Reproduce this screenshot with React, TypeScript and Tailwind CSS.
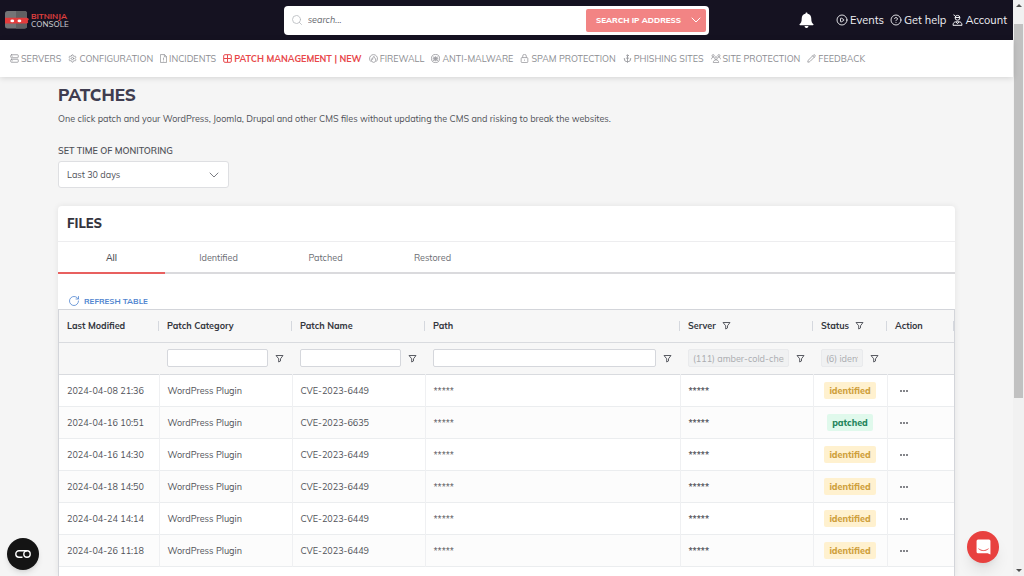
import type { ReactNode } from 'react'
import {
  Anchor,
  ChevronDown,
  CircleHelp,
  CirclePlay,
  Pencil,
  RotateCw,
  Search,
  Server,
  Settings,
} from 'lucide-react'

const navIcon = 'size-[9px] shrink-0'

const navItems: { label: string; icon: ReactNode; active?: boolean }[] = [
  { label: 'SERVERS', icon: <Server className={navIcon} strokeWidth={2} /> },
  { label: 'CONFIGURATION', icon: <Settings className={navIcon} strokeWidth={2} /> },
  { label: 'INCIDENTS', icon: <IncidentIcon /> },
  { label: 'PATCH MANAGEMENT | NEW', icon: <PatchIcon />, active: true },
  { label: 'FIREWALL', icon: <FirewallIcon /> },
  { label: 'ANTI-MALWARE', icon: <MalwareIcon /> },
  { label: 'SPAM PROTECTION', icon: <LockIcon /> },
  { label: 'PHISHING SITES', icon: <Anchor className={navIcon} strokeWidth={2} /> },
  { label: 'SITE PROTECTION', icon: <PeopleIcon /> },
  { label: 'FEEDBACK', icon: <Pencil className={navIcon} strokeWidth={2} /> },
]

const tabs = ['All', 'Identified', 'Patched', 'Restored']

const rows = [
  { date: '2024-04-08 21:36', name: 'CVE-2023-6449', status: 'identified' },
  { date: '2024-04-16 10:51', name: 'CVE-2023-6635', status: 'patched' },
  { date: '2024-04-16 14:30', name: 'CVE-2023-6449', status: 'identified' },
  { date: '2024-04-18 14:50', name: 'CVE-2023-6449', status: 'identified' },
  { date: '2024-04-24 14:14', name: 'CVE-2023-6449', status: 'identified' },
  { date: '2024-04-26 11:18', name: 'CVE-2023-6449', status: 'identified' },
]

function App() {
  return (
    <div className="flex h-screen overflow-hidden bg-[#f5f5f5] font-['Mulish','Open_Sans',sans-serif] text-[9px] text-[#4f5157]">
      <div className="relative flex min-w-0 flex-1 flex-col">
        <Header />
        <Nav />
        <main className="flex min-h-0 flex-1 flex-col px-[58px]">
          <Intro />
          <Files />
        </main>
        <button aria-label="Cookie settings" className="absolute bottom-1.5 left-[7px] flex size-8 items-center justify-center rounded-full bg-[#141414] shadow-md">
          <svg viewBox="0 0 16 8" className="w-4" fill="none" stroke="white" strokeWidth="1.4">
            <path d="M12 .8H4a3.200 3.200 0 0 0 0 6.400h3.500" />
            <circle cx="12" cy="4" r="3.200" />
          </svg>
        </button>
        <button aria-label="Open chat" className="absolute bottom-[13px] right-3.5 flex size-8 items-center justify-center rounded-full bg-[#e8413f] shadow-lg">
          <svg viewBox="0 0 16 17" className="w-[15px]" fill="none">
            <path d="M2.2 0.5h11.6a1.6 1.6 0 0 1 1.6 1.6V16.4l-3-1.2H2.2a1.6 1.6 0 0 1-1.6-1.6V2.1A1.6 1.6 0 0 1 2.2 .5z" fill="white" />
            <path d="M3 10.6c3 2.4 7 2.4 10 0" stroke="#e8413f" strokeWidth="1" strokeLinecap="round" />
          </svg>
        </button>
      </div>
      <Scrollbar />
    </div>
  )
}

function Header() {
  return (
    <header className="flex h-10 shrink-0 items-center bg-[#151221]">
      <a href="#" className="flex w-[28%] items-center gap-0.5 pl-[5px]">
        <Logo />
        <span className="text-[8px] leading-2 text-[#c9c9cf]">
          <span className="block font-bold text-[#e0403f]">BITNINJA</span>
          <span className="block font-medium">CONSOLE</span>
        </span>
      </a>
      <div className="flex h-[29px] w-[42%] items-center rounded-sm bg-white pl-[7px] pr-[3px]">
        <Search className="size-3 text-[#b5b7bc]" strokeWidth={1.6} />
        <input aria-label="Search" placeholder="search..." className="ml-[5px] min-w-0 flex-1 italic outline-none placeholder:text-[#66686e]" />
        <button className="flex h-[23px] w-[120px] items-center justify-between rounded-xs bg-[#f28484] pl-2.5 pr-0.5 text-[8px] font-extrabold text-white">
          SEARCH IP ADDRESS
          <ChevronDown className="size-4" strokeWidth={1.5} />
        </button>
      </div>
      <div className="flex flex-1 items-center justify-end gap-1.5 pr-1.5 text-[11px] text-[#f0f0f4]">
        <button aria-label="Notifications" className="mr-4">
          <svg viewBox="0 0 16 18" className="w-[15px]" fill="white">
            <path d="M8 .6c.7 0 1.1.5 1.1 1.2 2.5.5 4 2.400 4 5.100 0 3.600.9 4.900 2.100 5.900.6.500.300 1.300-.500 1.300H1.300c-.8 0-1.100-.800-.5-1.300C2 11.800 2.900 10.500 2.900 6.900c0-2.700 1.500-4.600 4-5.100C6.900 1.100 7.300.6 8 .6zM5.900 15h4.200a2.100 2.100 0 0 1-4.200 0z" />
          </svg>
        </button>
        <a href="#" className="flex items-center gap-0.5">
          <CirclePlay className="size-3" strokeWidth={1.8} />
          Events
        </a>
        <a href="#" className="flex items-center gap-0.5">
          <CircleHelp className="size-3" strokeWidth={1.8} />
          Get help
        </a>
        <a href="#" className="flex items-center gap-0.5">
          <AccountIcon />
          Account
        </a>
      </div>
    </header>
  )
}

function Nav() {
  return (
    <nav className="z-10 flex h-[37px] shrink-0 items-center gap-[7px] bg-white pl-2.5 text-[#8b8c91] shadow-[0_1px_6px_rgba(0,0,0,0.14)]">
      {navItems.map((item) => (
        <a
          key={item.label}
          href="#"
          className={`flex items-center gap-0.5 whitespace-nowrap ${item.active ? 'font-bold text-[#e8474a]' : ''}`}
        >
          {item.icon}
          {item.label}
        </a>
      ))}
    </nav>
  )
}

function Intro() {
  return (
    <section className="shrink-0 pt-2">
      <h1 className="text-[17px] font-extrabold leading-5 text-[#3f3d50]">PATCHES</h1>
      <p className="mt-1.5 leading-4">
        One click patch and your WordPress, Joomla, Drupal and other CMS files without updating the CMS and risking to break the websites.
      </p>
      <label htmlFor="monitoring" className="mt-[18px] block font-semibold leading-3">
        SET TIME OF MONITORING
      </label>
      <div className="relative mt-1 w-[171px]">
        <select id="monitoring" className="h-[27px] w-full appearance-none rounded-[3px] border border-[#dedfe2] bg-white pl-2">
          <option>Last 30 days</option>
        </select>
        <ChevronDown className="pointer-events-none absolute right-[7px] top-1.5 size-4 text-[#7b7d83]" strokeWidth={1.5} />
      </div>
    </section>
  )
}

function Files() {
  return (
    <section className="mt-[18px] flex min-h-0 flex-1 flex-col rounded-t-sm bg-white shadow-[0_0_6px_rgba(0,0,0,0.08)]">
      <h2 className="h-9 shrink-0 border-b border-[#ededef] pl-[9px] text-[13px] font-extrabold leading-[35px] text-[#34343d]">FILES</h2>
      <div className="flex h-8 shrink-0 border-b-2 border-[#dadadd]">
        {tabs.map((tab, i) => (
          <button
            key={tab}
            className={`-mb-0.5 w-[107px] border-b-2 pt-0.5 ${i === 0 ? 'border-[#e8605f] font-semibold' : 'border-transparent text-[#6a6c72]'}`}
          >
            {tab}
          </button>
        ))}
      </div>
      <button className="mt-[19px] flex h-4 shrink-0 items-center gap-1 self-start pl-2.5 text-[8px] font-bold text-[#5185d0]">
        <RotateCw className="size-3" strokeWidth={1.6} />
        REFRESH TABLE
      </button>
      <div className="min-h-0 flex-1 overflow-hidden border border-b-0 border-[#d3d5da]">
        <PatchTable />
      </div>
    </section>
  )
}

function PatchTable() {
  return (
    <table className="w-full table-fixed border-collapse text-left">
      <colgroup>
        <col className="w-[100px]" />
        <col className="w-[133px]" />
        <col className="w-[133px]" />
        <col />
        <col className="w-[133px]" />
        <col className="w-[74px]" />
        <col className="w-[67px]" />
      </colgroup>
      <thead className="bg-[#f7f7f7] text-[#33363d]">
        <tr className="h-8 border-b border-[#d9dbdf]">
          <Heading>Last Modified</Heading>
          <Heading>Patch Category</Heading>
          <Heading>Patch Name</Heading>
          <Heading>Path</Heading>
          <Heading filter>Server</Heading>
          <Heading filter>Status</Heading>
          <Heading>Action</Heading>
        </tr>
        <tr className="h-8 border-b border-[#d9dbdf]">
          <td />
          <FilterCell label="Patch category" />
          <FilterCell label="Patch name" />
          <FilterCell label="Path" />
          <FilterCell label="Server" value="(111) amber-cold-cherry" />
          <FilterCell label="Status" value="(6) identified" />
          <td />
        </tr>
      </thead>
      <tbody>
        {rows.map((row) => (
          <tr key={row.date} className="h-8 border-b border-[#ebedef] even:bg-[#fcfcfc] *:border-r *:border-[#eff0f2] *:pl-2 *:pt-px *:last:border-r-0">
            <td>{row.date}</td>
            <td>WordPress Plugin</td>
            <td>{row.name}</td>
            <td>*****</td>
            <td className="font-bold">*****</td>
            <td className="pr-2 text-center">
              <span
                className={`inline-block rounded-xs px-[5px] font-extrabold leading-[17px] ${
                  row.status === 'patched' ? 'bg-[#e0f9ec] text-[#24855c]' : 'bg-[#fff1cf] text-[#cfa03c]'
                }`}
              >
                {row.status}
              </span>
            </td>
            <td>
              <button aria-label="Row actions" className="ml-1 flex gap-px">
                <Dot />
                <Dot />
                <Dot />
              </button>
            </td>
          </tr>
        ))}
      </tbody>
    </table>
  )
}

function Heading({ children, filter }: { children: ReactNode; filter?: boolean }) {
  return (
    <th className="pl-2 font-bold">
      <span className="flex h-[10px] items-center gap-1.5 border-r border-[#d5d8de]">
        {children}
        {filter && <FilterIcon />}
      </span>
    </th>
  )
}

function FilterCell({ label, value }: { label: string; value?: string }) {
  return (
    <td className="pl-2">
      <span className="flex items-center gap-[7px] pr-2">
        <input
          aria-label={`${label} filter`}
          defaultValue={value}
          disabled={value !== undefined}
          className="h-[18px] min-w-0 flex-1 rounded-xs border border-[#d5d7dc] bg-white px-1 disabled:border-[#e9eaec] disabled:bg-[#f0f1f2] disabled:text-[#a9abaf]"
        />
        <button aria-label={`${label} filter options`}>
          <FilterIcon />
        </button>
      </span>
    </td>
  )
}

function Dot() {
  return <span className="size-0.5 rounded-full bg-[#5b5d63]" />
}

function FilterIcon() {
  return (
    <svg viewBox="0 0 9 9" className="size-[9px] shrink-0" fill="none" stroke="#5a5c63" strokeWidth="1">
      <path d="M1 1.500h7L5.500 4.800V7L3.700 8V4.800z" strokeLinejoin="round" />
    </svg>
  )
}

function Scrollbar() {
  return (
    <div className="flex w-[11px] shrink-0 flex-col items-center bg-[#f1f1f1] px-px">
      <span className="mt-1 border-x-[3px] border-b-[3px] border-x-transparent border-b-[#505050]" />
      <span className="mt-[17px] h-[65%] w-full bg-[#c1c1c1]" />
      <span className="mb-1 mt-auto border-x-[3px] border-t-[3px] border-x-transparent border-t-[#505050]" />
    </div>
  )
}

function Logo() {
  return (
    <svg viewBox="0 0 24 18" className="w-6">
      <rect width="22" height="17.500" rx="2.500" fill="#747476" />
      <path d="M11 0h8.500a2.500 2.500 0 0 1 2.500 2.500V15a2.500 2.500 0 0 1-2.500 2.500H11z" fill="#606062" />
      <path d="M0 6.800h22l2 1.200-1.300 2 .5 1.600-1.200 1H0z" fill="#e33b3b" />
      <ellipse cx="7.300" cy="9.900" rx="1.900" ry="1.300" fill="white" />
      <ellipse cx="14.400" cy="9.900" rx="1.900" ry="1.300" fill="white" />
    </svg>
  )
}

function IncidentIcon() {
  return (
    <svg viewBox="0 0 8 10" className="h-[9px] w-[7px]" fill="none" stroke="currentColor" strokeWidth=".8">
      <path d="M.5.5h4.700L7.500 2.800v6.700h-7zM5 .5v2.500h2.500M4 4v2.600M4 7.400v.9" />
    </svg>
  )
}

function PatchIcon() {
  return (
    <svg viewBox="0 0 9 9" className={navIcon} fill="none" stroke="currentColor" strokeWidth="1">
      <rect x=".7" y=".7" width="7.600" height="7.600" rx="1.200" />
      <path d="M4.500 1v7M1 4.500h7" />
    </svg>
  )
}

function LockIcon() {
  return (
    <svg viewBox="0 0 9 10" className={navIcon} fill="none" stroke="currentColor" strokeWidth=".8">
      <rect x=".8" y="4" width="7.400" height="5.500" rx="1" />
      <path d="M2.500 4V2.400a2 2 0 0 1 4 0V4M4.500 6.200v1.200" />
    </svg>
  )
}

function FirewallIcon() {
  return (
    <svg viewBox="0 0 10 10" className={navIcon} fill="none" stroke="currentColor" strokeWidth=".8">
      <path d="M2.500 8.700A4.400 4.400 0 1 1 7.500 8.700" />
      <path d="M5 9.300C2.600 9 2 6.600 3.300 5.100c.2.700.5.900.9.900C4 4.500 4.400 3.300 5.600 2.500c0 1.500 1.900 2.200 1.900 4.300C7.500 8.200 6.500 9.200 5 9.300z" />
    </svg>
  )
}

function MalwareIcon() {
  return (
    <svg viewBox="0 0 10 10" className={navIcon} fill="none" stroke="currentColor" strokeWidth=".8">
      <circle cx="5" cy="5" r="4.500" />
      <ellipse cx="5" cy="5.300" rx="1.500" ry="2.200" />
      <path d="M2 3l1.600 1M8 3L6.400 4M1.800 5.300h6.400M2 7.500l1.600-.8M8 7.500l-1.600-.8M5 3.200v4" />
    </svg>
  )
}

function PeopleIcon() {
  return (
    <svg viewBox="0 0 11 10" className="h-[9px] w-[10px]" fill="none" stroke="currentColor" strokeWidth=".8">
      <circle cx="5.500" cy="4.600" r="1.500" />
      <circle cx="2.300" cy="1.900" r="1.200" />
      <circle cx="8.700" cy="1.900" r="1.200" />
      <path d="M2.500 9.500c0-4 6-4 6 0zM.5 5.800c0-1.600 1-2.300 2.500-2.100M10.500 5.800c0-1.600-1-2.300-2.500-2.100" />
    </svg>
  )
}

function AccountIcon() {
  return (
    <svg viewBox="0 0 11 12" className="h-3 w-[11px]" fill="none" stroke="currentColor" strokeWidth="1">
      <circle cx="5.500" cy="3.800" r="2.400" />
      <path d="M3 3.500h5M3.200 1.800L1.500.8M1 11.300c0-2.600 1.500-3.500 2.800-3.500h3.400c1.300 0 2.800.9 2.800 3.500zM4 8l1.500 1.700L7 8" />
    </svg>
  )
}

export default App
